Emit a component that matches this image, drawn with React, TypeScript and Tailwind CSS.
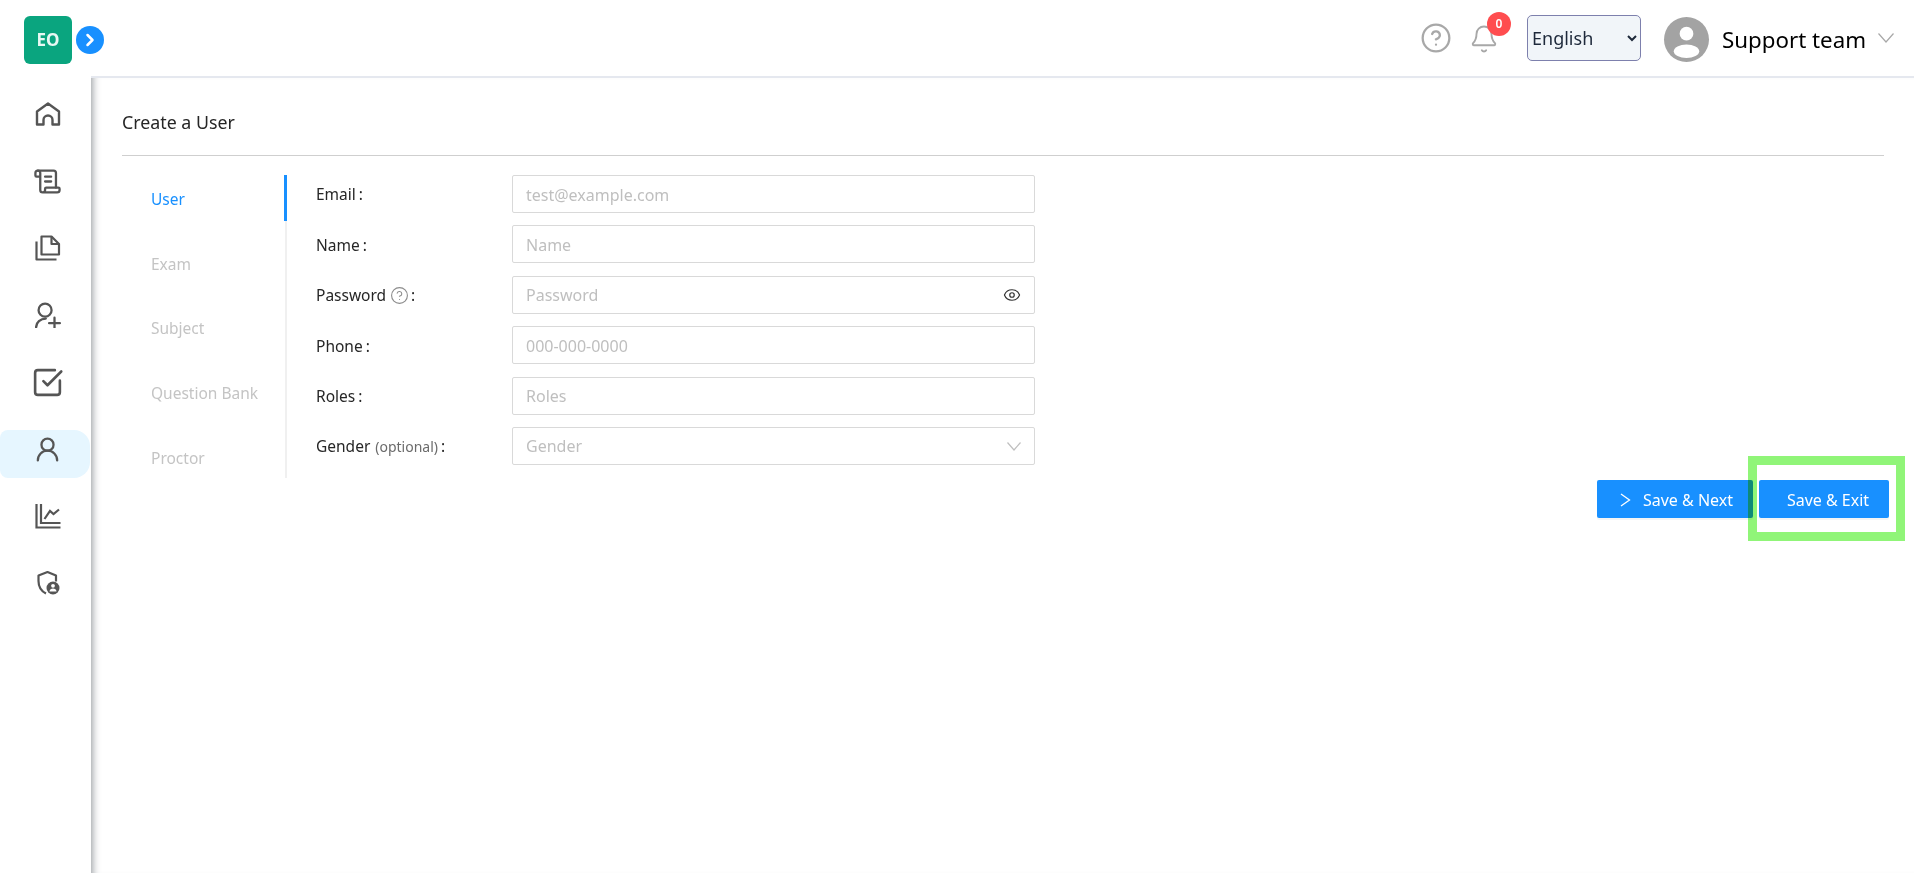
import { Eye, ChevronRight, CircleHelp, Bell, ScrollText, SquareCheckBig, UserRound } from 'lucide-react';

const FONT = "font-['Noto_Sans','Open_Sans',sans-serif]";

const HomeIcon = () => (
  <svg width="26" height="26" viewBox="0 0 26 26" fill="none" stroke="#555" strokeWidth="2.4" strokeLinejoin="round">
    <path d="M2 10.500 13 2.500l11 8v13h-6.500v-4.500a4.500 4.500 0 0 0-9 0v4.500H2z" />
  </svg>
);

const PagesIcon = () => (
  <svg width="26" height="26" viewBox="0 0 26 26" fill="none" stroke="#555" strokeWidth="2.2" strokeLinejoin="round">
    <path d="M6.500 1.500h10l7.500 7.500v10.500H6.500z" />
    <path d="M16.500 1.500V9H24" />
    <path d="M1.500 6.500v18h20" />
  </svg>
);

const InviteIcon = () => (
  <svg width="26" height="26" viewBox="0 0 24 24" fill="none" stroke="#555" strokeWidth="2.1" strokeLinecap="round">
    <circle cx="9.300" cy="7.500" r="6" />
    <path d="M1 23.500C1 19 5 15.300 10 15.300" />
    <path d="M13 19.500h10M18 14.500v10" />
  </svg>
);

const ChartIcon = () => (
  <svg width="26" height="26" viewBox="0 0 26 26" fill="none" stroke="#555" strokeWidth="2.2">
    <path d="M1.500 1v23.500h24" />
    <path d="M6 1v19h19.500" />
    <path d="M9.500 16 15 8l3.500 3L24 6.500" />
  </svg>
);

const ShieldUserIcon = () => (
  <svg width="26" height="26" viewBox="0 0 26 26" fill="none">
    <path d="M11 23.500C6 21 3.500 16 3.500 11V5.500L12.500 2l8.500 3.500v6" stroke="#555" strokeWidth="2.2" strokeLinejoin="round" />
    <circle cx="18" cy="18" r="6.500" fill="#555" />
    <circle cx="18" cy="15.800" r="1.900" fill="#fff" />
    <path d="M14.500 21.500c0-4 7-4 7 0z" fill="#fff" />
  </svg>
);

const navItems = [
  { key: 'home', icon: <HomeIcon /> },
  { key: 'exams', icon: <ScrollText size={29} color="#555" strokeWidth={1.9} /> },
  { key: 'pages', icon: <PagesIcon /> },
  { key: 'invite', icon: <InviteIcon /> },
  { key: 'check', icon: <SquareCheckBig size={33} color="#555" strokeWidth={1.9} /> },
  { key: 'user', icon: <UserRound size={29} color="#555" strokeWidth={1.9} />, active: true },
  { key: 'chart', icon: <ChartIcon /> },
  { key: 'shield', icon: <ShieldUserIcon /> },
];

const tabs = ['User', 'Exam', 'Subject', 'Question Bank', 'Proctor'];

const fields = [
  { label: 'Email', placeholder: 'test@example.com' },
  { label: 'Name', placeholder: 'Name' },
  { label: 'Password', placeholder: 'Password', help: true, eye: true },
  { label: 'Phone', placeholder: '000-000-0000' },
  { label: 'Roles', placeholder: 'Roles' },
  { label: 'Gender', placeholder: 'Gender', optional: true, select: true },
];

export default function App() {
  return (
    <div className={`flex h-screen w-full overflow-hidden bg-white ${FONT}`}>
      {/* Sidebar */}
      <aside className="relative w-[91px] shrink-0 bg-white">
        <div className="h-[76px] pl-[24px] pt-[16px]">
          <div className="flex h-[48px] w-[48px] items-center justify-center rounded-[6px] bg-[#0aa57f] text-[17px] font-bold text-[#e8f8f3]">
            EO
          </div>
        </div>
        <div className="absolute left-[76px] top-[26px] z-10 flex h-[28px] w-[28px] items-center justify-center rounded-full bg-[#1890ff]">
          <ChevronRight size={20} color="#fff" strokeWidth={3} />
        </div>
        <nav className="flex flex-col pt-[19px]">
          {navItems.map(n => (
            <div
              key={n.key}
              className={`mb-[19px] flex h-[48px] w-[90px] items-center justify-center pb-[10px] pl-[5px] ${n.active ? 'rounded-l-[8px] rounded-r-[16px] bg-[#e6f6ff]' : ''}`}
            >
              {n.icon}
            </div>
          ))}
        </nav>
      </aside>

      <div className="flex min-w-0 flex-1 flex-col">
        {/* Header */}
        <header className="flex h-[76px] shrink-0 items-center justify-end bg-white pr-[20px]">
          <CircleHelp size={32} color="#a8a8a8" strokeWidth={1.7} />
          <div className="relative ml-[17px] mr-[28px] mt-[2px]">
            <Bell size={30} color="#a8a8a8" strokeWidth={1.5} />
            <span className="absolute left-[18px] top-[-12px] flex h-[24px] w-[24px] items-center justify-center rounded-full bg-[#ff4d4f] text-[12px] font-semibold text-white">
              0
            </span>
          </div>
          <select className="h-[46px] w-[114px] rounded-[5px] border border-[#7d80ad] bg-[#f1f5f9] pr-[4px] text-[18px] text-[#1e293b]">
            <option>English</option>
          </select>
          <div className="ml-[23px] mt-[3px] flex h-[45px] w-[45px] items-center justify-center overflow-hidden rounded-full bg-[#a3a3a3]">
            <svg width="45" height="45" viewBox="0 0 46 46" fill="#fff">
              <circle cx="23" cy="17" r="7" />
              <ellipse cx="23" cy="35" rx="13" ry="7" />
            </svg>
          </div>
          <span className="ml-[13px] mt-[3px] text-[22.300px] text-black">Support team</span>
          <svg width="16" height="10" viewBox="0 0 16 10" fill="none" stroke="#a8a8a8" strokeWidth="1.2" className="ml-[12px]">
            <path d="M.5.500 8 9l7.500-8.500" />
          </svg>
        </header>

        {/* Content */}
        <main className="flex-1 border-t-[2px] border-[#e5e8ef] bg-white pl-[31px] pr-[30px] shadow-[inset_9px_0_8px_-8px_#8a8f94]">
          <h1 className="flex h-[78px] items-center border-b border-[#cfcfcf] pt-[12px] text-[17.800px] font-normal text-[#262626]">Create a User</h1>

          <div className="flex pt-[19px]">
            <ul className="mb-[2px] h-[303px] w-[165px] shrink-0 border-r-[2px] border-[#f0f0f0]">
              {tabs.map((t, i) => (
                <li
                  key={t}
                  className={`relative flex h-[64.700px] items-start pl-[29px] pt-[13px] text-[15.500px] ${i === 0 ? 'text-[#1890ff]' : 'text-[#c4c4c4]'}`}
                >
                  {t}
                  {i === 0 && <span className="absolute right-[-2px] top-0 h-[46px] w-[3px] bg-[#1890ff]" />}
                </li>
              ))}
            </ul>

            <div className="flex flex-col gap-[12.400px] pl-[29px]">
              {fields.map(f => (
                <div key={f.label} className="flex h-[38px] items-center">
                  <label className="flex w-[196px] items-center pt-[2px] text-[15.500px] text-[#262626]">
                    {f.label}
                    {f.optional && <span className="ml-[5px] text-[14px] text-[#6b6b6b]">(optional)</span>}
                    {f.help && <CircleHelp size={19} color="#8c8c8c" strokeWidth={1.4} className="ml-[4px]" />}
                    <span className={f.help ? 'ml-[2px]' : 'ml-[3px]'}>:</span>
                  </label>
                  <div className="flex h-[38px] w-[523px] items-center justify-between rounded-[2px] border border-[#d9d9d9] bg-white px-[13px] pt-[1px] text-[16px] text-[#bfbfbf]">
                    <span>{f.placeholder}</span>
                    {f.eye && <Eye size={18} color="#333" strokeWidth={1.6} />}
                    {f.select && (
                      <svg width="14" height="9" viewBox="0 0 14 9" fill="none" stroke="#bfbfbf" strokeWidth="1.2">
                        <path d="M.5.500 7 8l6.500-7.500" />
                      </svg>
                    )}
                  </div>
                </div>
              ))}
            </div>
          </div>

          {/* Actions */}
          <div className="mr-[-5px] flex justify-end gap-[6px]">
            <button className="flex h-[38px] w-[156px] items-center justify-center rounded-[2px] bg-[#1890ff] pl-[3px] pt-[1px] text-[16px] text-white shadow-[0_2px_0_rgba(0,0,0,0.04)]">
              <svg width="11" height="14" viewBox="0 0 11 14" fill="none" stroke="#fff" strokeWidth="1.3" className="mr-[12px]">
                <path d="M1 1l8.500 6L1 13" />
              </svg>
              Save &amp; Next
            </button>
            <button className="h-[38px] w-[130px] rounded-[2px] bg-[#1890ff] pl-[8px] pt-[1px] text-[16px] text-white shadow-[0_2px_0_rgba(0,0,0,0.04)]">
              Save &amp; Exit
            </button>
          </div>
        </main>
      </div>

      {/* Highlight annotation over the button */}
      <div className="pointer-events-none absolute left-[1748px] top-[456px] h-[85px] w-[157px] border-[9px] border-[#90f578] mix-blend-multiply" />
    </div>
  );
}
